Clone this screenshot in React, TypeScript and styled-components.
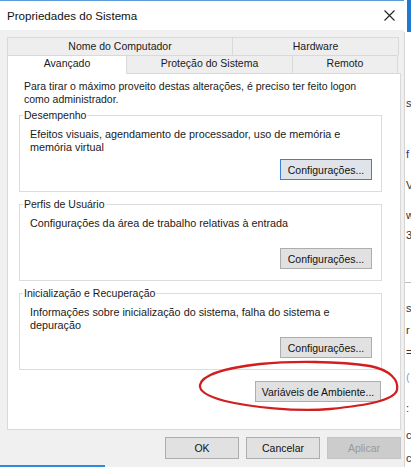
import React from 'react';
import styled, { createGlobalStyle } from 'styled-components';

const Global = createGlobalStyle`
  html, body { margin: 0; padding: 0; background: #fff; }
  body { font-family: "Liberation Sans", Arial, sans-serif; -webkit-font-smoothing: antialiased; }
  * { box-sizing: border-box; }
`;

const Screen = styled.div`
  position: relative;
  width: 411px;
  height: 467px;
  overflow: hidden;
  display: flex;
  background: #fff;
`;

const Window = styled.div`
  width: 404px;
  flex: none;
  display: flex;
  flex-direction: column;
  background: #f0f0f0;
`;

const TitleBar = styled.div`
  height: 30px;
  flex: none;
  border-top: 1px solid #5b9bd9;
  background: #fff;
  display: flex;
  align-items: center;
  justify-content: space-between;
  padding: 0 9px 0 7px;
  font-size: 11.6px;
  color: #111;
`;

const CloseIcon = styled.svg`
  width: 11px;
  height: 11px;
  display: block;
`;

const Body = styled.div`
  display: flex;
  flex-direction: column;
  padding: 7px 3px 6px 7px;
  font-size: 10.5px;
  color: #1a1a1a;
`;

const TabStrip = styled.div`
  display: flex;
  flex-direction: column;
  width: 392px;
`;

const TabRow = styled.div`
  display: flex;
  height: 18px;
`;

const Tab = styled.div<{ $w: number; $active?: boolean; $last?: boolean; $low?: boolean }>`
  width: ${(p) => p.$w}px;
  flex: none;
  position: relative;
  z-index: ${(p) => (p.$active ? 2 : 0)};
  height: ${(p) => (p.$active ? 19 : 18)}px;
  background: ${(p) => (p.$active ? '#fff' : '#eeeeee')};
  border-top: 1px solid #d9d9d9;
  border-left: 1px solid #d9d9d9;
  border-right: ${(p) => (p.$last || p.$active ? '1px solid #d9d9d9' : 'none')};
  margin-right: ${(p) => (p.$active ? -1 : 0)}px;
  text-align: center;
  line-height: ${(p) => (p.$low ? 15 : 17)}px;
  padding-bottom: ${(p) => (p.$low ? 2 : 0)}px;
  white-space: nowrap;
  color: #1a1a1a;
`;

const Panel = styled.div`
  width: 394px;
  background: #fff;
  border: 1px solid #d9d9d9;
  padding: 6px 18px 27px 11px;
  display: flex;
  flex-direction: column;
`;

const Intro = styled.div`
  padding-left: 5px;
  line-height: 13px;
`;

const Group = styled.fieldset<{ $mt: number }>`
  margin: ${(p) => p.$mt}px 0 0;
  border: 1px solid #dcdcdc;
  padding: 0;
  min-width: 0;
`;

const Legend = styled.legend`
  margin-left: 3px;
  padding: 0 1px;
  line-height: 13px;
  font-size: 10.5px;
`;

const GroupBody = styled.div`
  display: flex;
  flex-direction: column;
  padding: 6px 9px 11px 10px;
`;

const Desc = styled.div`
  min-height: 26px;
  line-height: 13px;
  font-size: 10.8px;
`;

const ButtonRow = styled.div<{ $mt: number; $mr?: number; $gap?: number }>`
  display: flex;
  justify-content: flex-end;
  gap: ${(p) => p.$gap ?? 0}px;
  margin-top: ${(p) => p.$mt}px;
  margin-right: ${(p) => p.$mr ?? 0}px;
`;

type Tone = 'normal' | 'focus' | 'disabled';

const Button = styled.button<{ $w: number; $h?: number; $tone?: Tone }>`
  width: ${(p) => p.$w}px;
  height: ${(p) => p.$h ?? 21}px;
  padding: 0;
  margin: 0;
  font-family: "Liberation Sans", Arial, sans-serif;
  font-size: 10.5px;
  color: ${(p) => (p.$tone === 'disabled' ? '#9a9a9a' : '#111')};
  background: ${(p) =>
    p.$tone === 'disabled' ? '#cccccc' : p.$tone === 'focus' ? '#e0e4ea' : '#e1e1e1'};
  border: 1px solid
    ${(p) => (p.$tone === 'disabled' ? '#c4c4c4' : p.$tone === 'focus' ? '#3a80d4' : '#adadad')};
  white-space: nowrap;
`;

const TaskStrip = styled.div`
  width: 105px;
  height: 2px;
  background: #2b8de0;
`;

const Backdrop = styled.div`
  flex: 1;
  display: flex;
  flex-direction: column;
  background: #fff;
  overflow: hidden;
`;

const BlueCorner = styled.div`
  height: 32px;
  flex: none;
  background: #fff;
  border-right: 4px solid #1c7ad2;
`;

const BackdropPage = styled.div`
  flex: 1;
  display: flex;
  flex-direction: column;
  border-left: 1px solid #d4d4d4;
`;

const Frag = styled.div<{ $mt: number; $c?: string }>`
  margin-top: ${(p) => p.$mt}px;
  height: 12px;
  line-height: 12px;
  font-size: 11px;
  padding-left: 1px;
  color: ${(p) => p.$c ?? '#333'};
  white-space: nowrap;
`;

const FragLine = styled.div<{ $mt: number }>`
  margin-top: ${(p) => p.$mt}px;
  height: 1px;
  background: #bdbdbd;
`;

const Annotation = styled.svg`
  position: absolute;
  left: 195px;
  top: 358px;
  width: 206px;
  height: 56px;
  pointer-events: none;
`;

const frags: { ch: string; mt: number; c?: string }[] = [
  { ch: 's', mt: 65 },
  { ch: 'f', mt: 39, c: '#1b3a8c' },
  { ch: 'V', mt: 19 },
  { ch: 'w', mt: 18 },
  { ch: '3', mt: 8 },
];
const frags2: { ch: string; mt: number; c?: string }[] = [
  { ch: 's', mt: 19 },
  { ch: 'r', mt: 10 },
  { ch: '=', mt: 10 },
  { ch: '(', mt: 13, c: '#7aa7d6' },
  { ch: ':', mt: 19 },
  { ch: 'c', mt: 15 },
  { ch: 'c', mt: 11 },
];

export default function App() {
  return (
    <>
      <Global />
      <Screen>
        <Window>
          <TitleBar>
            <span>Propriedades do Sistema</span>
            <CloseIcon viewBox="0 0 11 11">
              <path d="M0.5 0.5 L10.5 10.5 M10.5 0.5 L0.5 10.5" stroke="#222" strokeWidth="1.1" fill="none" />
            </CloseIcon>
          </TitleBar>
          <Body>
            <TabStrip>
              <TabRow>
                <Tab $w={225}>Nome do Computador</Tab>
                <Tab $w={167} $last>Hardware</Tab>
              </TabRow>
              <TabRow>
                <Tab $w={120} $active $low>Avançado</Tab>
                <Tab $w={166} $low>Proteção do Sistema</Tab>
                <Tab $w={106} $last $low>Remoto</Tab>
              </TabRow>
            </TabStrip>
            <Panel>
              <Intro>
                Para tirar o máximo proveito destas alterações, é preciso ter feito logon
                <br />
                como administrador.
              </Intro>
              <Group $mt={3}>
                <Legend>Desempenho</Legend>
                <GroupBody>
                  <Desc>
                    Efeitos visuais, agendamento de processador, uso de memória e
                    <br />
                    memória virtual
                  </Desc>
                  <ButtonRow $mt={5}>
                    <Button $w={92} $tone="focus">Configurações...</Button>
                  </ButtonRow>
                </GroupBody>
              </Group>
              <Group $mt={6}>
                <Legend>Perfis de Usuário</Legend>
                <GroupBody>
                  <Desc>Configurações da área de trabalho relativas à entrada</Desc>
                  <ButtonRow $mt={5}>
                    <Button $w={92}>Configurações...</Button>
                  </ButtonRow>
                </GroupBody>
              </Group>
              <Group $mt={6}>
                <Legend>Inicialização e Recuperação</Legend>
                <GroupBody>
                  <Desc>
                    Informações sobre inicialização do sistema, falha do sistema e
                    <br />
                    depuração
                  </Desc>
                  <ButtonRow $mt={5}>
                    <Button $w={92}>Configurações...</Button>
                  </ButtonRow>
                </GroupBody>
              </Group>
              <ButtonRow $mt={11} $mr={1}>
                <Button $w={126}>Variáveis de Ambiente...</Button>
              </ButtonRow>
            </Panel>
            <ButtonRow $mt={7} $gap={7}>
              <Button $w={74} $h={22}>OK</Button>
              <Button $w={74} $h={22}>Cancelar</Button>
              <Button $w={74} $h={22} $tone="disabled">Aplicar</Button>
            </ButtonRow>
          </Body>
          <TaskStrip />
        </Window>
        <Backdrop>
          <BlueCorner />
          <BackdropPage>
            {frags.map((f, i) => (
              <Frag key={`a${i}`} $mt={f.mt} $c={f.c}>{f.ch}</Frag>
            ))}
            <FragLine $mt={41} />
            {frags2.map((f, i) => (
              <Frag key={`b${i}`} $mt={f.mt} $c={f.c}>{f.ch}</Frag>
            ))}
          </BackdropPage>
        </Backdrop>
        <Annotation viewBox="195 358 206 56">
          <path
            d="M200 385 C202 375 225 368 260 364 C290 361 340 361 370 366 C390 370 399 380 397 390 C394 400 370 405 330 409 C295 412 250 407 225 401 C206 396 199 391 200 385 Z"
            fill="none"
            stroke="#d21e1e"
            strokeWidth="2.3"
            strokeLinecap="round"
          />
        </Annotation>
      </Screen>
    </>
  );
}
